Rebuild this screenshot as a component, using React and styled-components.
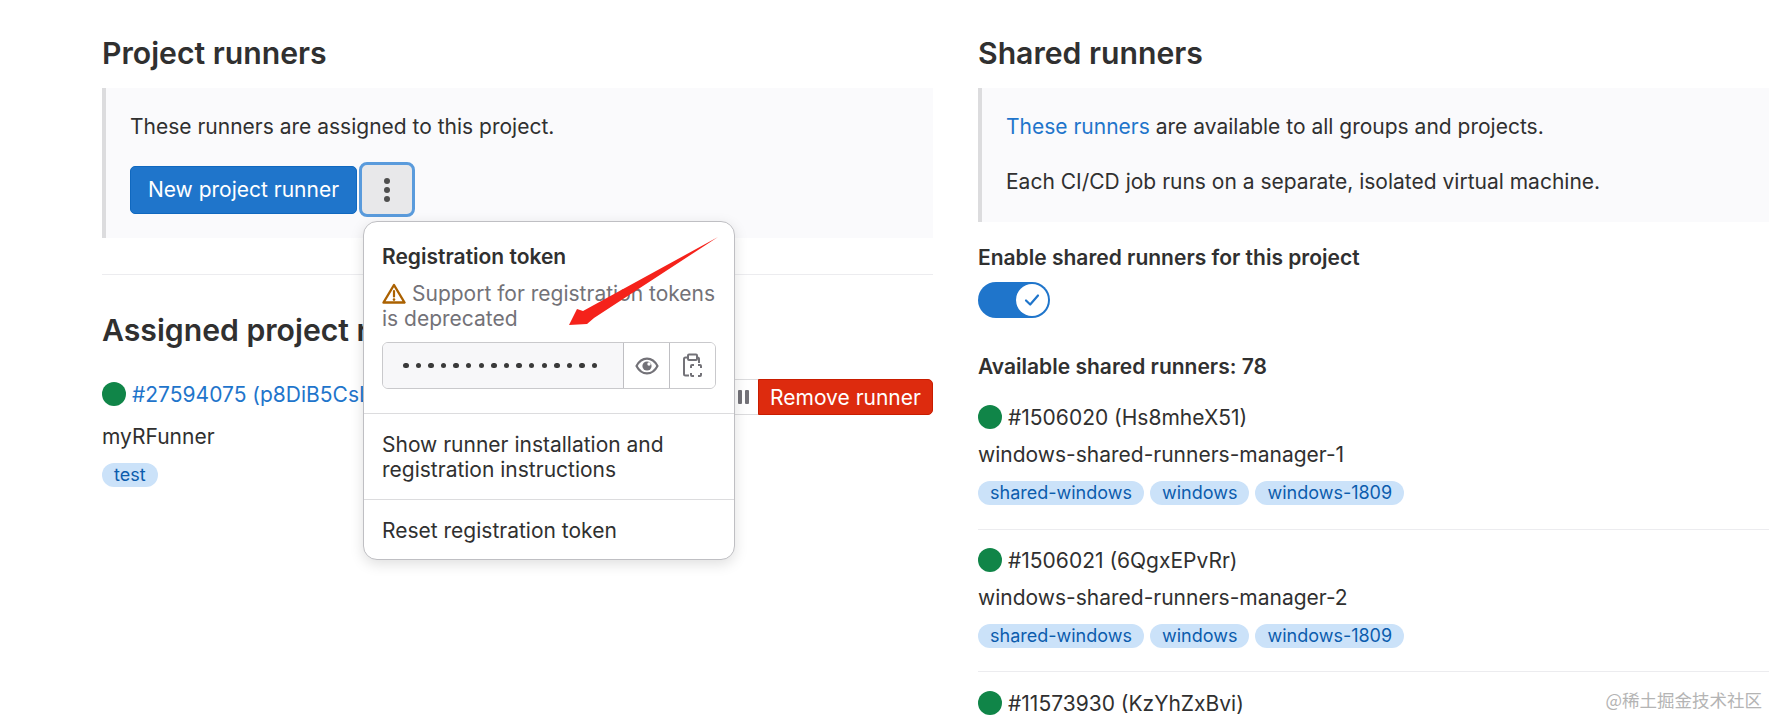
import React from "react";
import styled, { createGlobalStyle } from "styled-components";

const GlobalStyle = createGlobalStyle`
  html, body {
    margin: 0;
    padding: 0;
    background: #fff;
    overflow: hidden;
  }
  body {
    font-family: Inter, "Noto Sans", sans-serif;
    font-size: 21px;
    color: #303030;
  }
`;

const Page = styled.div`
  position: relative;
  width: 1769px;
  height: 716px;
  overflow: hidden;
  box-sizing: border-box;
  padding: 31px 0 0 102px;
  display: grid;
  grid-template-columns: 831px 831px;
  column-gap: 45px;
  align-items: start;
`;

const Column = styled.section`
  display: flex;
  flex-direction: column;
`;

const Heading = styled.h2`
  margin: ${(p) => p.$top || 0}px 0 0;
  font-size: 30.2px;
  line-height: 44px;
  height: 44px;
  font-weight: 600;
  color: #303030;
  white-space: nowrap;
`;

const Callout = styled.div`
  box-sizing: border-box;
  height: ${(p) => p.$height}px;
  margin-top: 13px;
  padding: 26px 24px 0;
  background: #fafafc;
  border-left: 4px solid #dcdcde;
`;

const CalloutText = styled.p`
  margin: 0 0 ${(p) => p.$gap || 0}px;
  line-height: 26px;
  white-space: nowrap;
`;

const Link = styled.a`
  color: #1f75cb;
  text-decoration: none;
  white-space: nowrap;
`;

const Actions = styled.div`
  display: flex;
  align-items: center;
  gap: 2px;
  margin-top: 22px;
  position: relative;
`;

const PrimaryButton = styled.button`
  box-sizing: border-box;
  width: 227px;
  height: 48px;
  padding: 0;
  border: 1px solid #1068bf;
  border-radius: 5px;
  background: #1f75cb;
  color: #fff;
  font: 400 21px Inter, sans-serif;
`;

const KebabButton = styled.button`
  box-sizing: border-box;
  width: 56px;
  height: 55px;
  padding: 0;
  border: 3px solid #5a9bdc;
  border-radius: 8px;
  background: #e8e8ea;
  display: flex;
  align-items: center;
  justify-content: center;
  gap: 3px;
  flex-direction: column;
`;

const KebabDot = styled.span`
  width: 6px;
  height: 6px;
  border-radius: 50%;
  background: #4f4f4f;
`;

const Dropdown = styled.div`
  position: absolute;
  left: 233px;
  top: 59px;
  z-index: 3;
  box-sizing: border-box;
  width: 372px;
  height: 339px;
  background: #fff;
  border: 1px solid #bfbfc3;
  border-radius: 14px;
  box-shadow: 0 4px 14px rgba(0, 0, 0, 0.13);
`;

const DropdownHead = styled.div`
  padding: 21px 18px 0;
  height: 192px;
  box-sizing: border-box;
  border-bottom: 1px solid #dcdcde;
`;

const DropdownTitle = styled.div`
  font-weight: 600;
  line-height: 28px;
`;

const Deprecation = styled.div`
  margin-top: 10px;
  line-height: 25px;
  color: #737278;
`;

const WarningIcon = styled.svg`
  width: 24px;
  height: 21px;
  vertical-align: -3px;
  margin-right: 6px;
`;

const TokenField = styled.div`
  display: flex;
  height: 47px;
  margin-top: 11px;
  box-sizing: border-box;
  border: 1px solid #c9c9cc;
  border-radius: 6px;
  overflow: hidden;
`;

const TokenValue = styled.div`
  flex: 1;
  background: #f7f7f9;
  padding-left: 20px;
  display: flex;
  align-items: center;
  gap: 7.1px;
`;

const TokenDot = styled.span`
  width: 5.5px;
  height: 5.5px;
  border-radius: 50%;
  background: #3a3a3a;
`;

const TokenButton = styled.div`
  width: 46px;
  flex: none;
  box-sizing: border-box;
  border-left: 1px solid #bfbfc3;
  display: flex;
  align-items: center;
  justify-content: center;
  background: #fff;
`;

const MenuItem = styled.div`
  box-sizing: border-box;
  height: ${(p) => p.$height}px;
  padding: 18px 18px 0;
  line-height: 25px;
  border-bottom: ${(p) => (p.$divided ? "1px solid #dcdcde" : "none")};
`;

const Divider = styled.hr`
  margin: ${(p) => p.$margin};
  border: 0;
  border-top: 1px solid #ececef;
`;

const StatusRow = styled.div`
  display: flex;
  align-items: center;
  gap: 6px;
  height: 26px;
  white-space: nowrap;
`;

const AssignedStatus = styled(StatusRow)`
  margin-top: 2px;
`;

const StatusDot = styled.span`
  width: 24px;
  height: 24px;
  flex: none;
  border-radius: 50%;
  background: #108548;
`;

const RunnerTitle = styled.div`
  display: flex;
  justify-content: space-between;
  align-items: flex-start;
  margin-top: ${(p) => p.$top}px;
`;

const RunnerActions = styled.div`
  display: flex;
  height: 36px;
`;

const PauseButton = styled.div`
  box-sizing: border-box;
  width: 56px;
  border: 1px solid #dcdcde;
  border-right: 0;
  border-radius: 5px 0 0 5px;
  display: flex;
  align-items: center;
  justify-content: flex-end;
  gap: 3px;
  padding-right: 9px;
`;

const PauseBar = styled.span`
  width: 4px;
  height: 14px;
  border-radius: 1px;
  background: #737278;
`;

const DangerButton = styled.button`
  box-sizing: border-box;
  width: 175px;
  padding: 0;
  border: 1px solid #c91c00;
  border-radius: 0 5px 5px 0;
  background: #dd2b0e;
  color: #fff;
  font: 400 21px Inter, sans-serif;
`;

const RunnerName = styled.div`
  margin-top: ${(p) => p.$top}px;
  line-height: 26px;
`;

const Tags = styled.div`
  display: flex;
  gap: 6px;
  margin-top: 13px;
`;

const Tag = styled.span`
  height: 24px;
  padding: 0 12px;
  border-radius: 12px;
  background: #cbe2f9;
  color: #0b5cad;
  font-size: 18px;
  line-height: 24px;
`;

const StrongLine = styled.div`
  font-weight: 600;
  line-height: 26px;
  margin-top: ${(p) => p.$top}px;
`;

const Toggle = styled.div`
  box-sizing: border-box;
  width: 72px;
  height: 36px;
  margin-top: 11px;
  padding: 2px;
  border-radius: 18px;
  background: #1f75cb;
  display: flex;
  justify-content: flex-end;
`;

const ToggleKnob = styled.span`
  width: 32px;
  height: 32px;
  border-radius: 50%;
  background: #fff;
  display: flex;
  align-items: center;
  justify-content: center;
`;

const RunnerList = styled.div`
  margin-top: 24px;
`;

const Arrow = styled.svg`
  position: absolute;
  left: 0;
  top: 0;
  z-index: 4;
  pointer-events: none;
`;

const Watermark = styled.div`
  position: absolute;
  right: 7px;
  top: 689px;
  z-index: 4;
  font-family: "Noto Sans CJK SC", sans-serif;
  font-size: 17.5px;
  line-height: 22px;
  color: #b4b4b4;
`;

const EyeIcon = () => (
  <svg width="24" height="24" viewBox="0 0 24 24" fill="none">
    <path
      d="M1.500 12C4 7.200 7.600 4.600 12 4.600S20 7.200 22.500 12C20 16.800 16.400 19.400 12 19.400S4 16.800 1.500 12Z"
      stroke="#737278"
      strokeWidth="2.200"
      strokeLinejoin="round"
    />
    <circle cx="12" cy="12" r="4.600" fill="#737278" />
    <circle cx="14" cy="10" r="1.700" fill="#fff" />
  </svg>
);

const ClipboardIcon = () => (
  <svg width="20" height="26" viewBox="0 0 20 26" fill="none" stroke="#737278" strokeWidth="2">
    <path d="M5 4.500H2.500A1.500 1.500 0 0 0 1 6v15a1.500 1.500 0 0 0 1.500 1.500H6" />
    <path d="M14 4.500h.5A1.500 1.500 0 0 1 16 6v4" />
    <rect x="5" y="1.500" width="9" height="5.500" rx="1" />
    <path d="M8 15v-2a1 1 0 0 1 1-1h2M15 12h2a1 1 0 0 1 1 1v2M18 20v2a1 1 0 0 1-1 1h-2M11 23H9a1 1 0 0 1-1-1v-2" />
  </svg>
);

const Runner = ({ id, name, tags }) => (
  <>
    <StatusRow>
      <StatusDot />
      <span>{id}</span>
    </StatusRow>
    <RunnerName $top={12}>{name}</RunnerName>
    <Tags>
      {tags.map((t) => (
        <Tag key={t}>{t}</Tag>
      ))}
    </Tags>
  </>
);

const sharedTags = ["shared-windows", "windows", "windows-1809"];

export default function App() {
  return (
    <>
      <GlobalStyle />
      <Page>
        <Column>
          <Heading>Project runners</Heading>
          <Callout $height={150}>
            <CalloutText>These runners are assigned to this project.</CalloutText>
            <Actions>
              <PrimaryButton>New project runner</PrimaryButton>
              <KebabButton>
                <KebabDot />
                <KebabDot />
                <KebabDot />
              </KebabButton>
              <Dropdown>
                <DropdownHead>
                  <DropdownTitle>Registration token</DropdownTitle>
                  <Deprecation>
                    <WarningIcon viewBox="0 0 24 21" fill="none">
                      <path
                        d="M12 2 L22.500 19.500 H1.500 Z"
                        stroke="#ab6100"
                        strokeWidth="2.400"
                        strokeLinejoin="round"
                      />
                      <path d="M12 8v5.500" stroke="#ab6100" strokeWidth="2.200" strokeLinecap="round" />
                      <circle cx="12" cy="16.600" r="1.300" fill="#ab6100" />
                    </WarningIcon>
                    Support for registration tokens is deprecated
                  </Deprecation>
                  <TokenField>
                    <TokenValue>
                      {Array.from({ length: 16 }, (_, i) => (
                        <TokenDot key={i} />
                      ))}
                    </TokenValue>
                    <TokenButton>
                      <EyeIcon />
                    </TokenButton>
                    <TokenButton>
                      <ClipboardIcon />
                    </TokenButton>
                  </TokenField>
                </DropdownHead>
                <MenuItem $height={86} $divided>
                  Show runner installation and registration instructions
                </MenuItem>
                <MenuItem $height={60}>Reset registration token</MenuItem>
              </Dropdown>
            </Actions>
          </Callout>
          <Divider $margin="36px 0 0" />
          <Heading $top={33}>Assigned project runners</Heading>
          <RunnerTitle $top={27}>
            <AssignedStatus>
              <StatusDot />
              <Link href="#">#27594075 (p8DiB5CsL)</Link>
            </AssignedStatus>
            <RunnerActions>
              <PauseButton>
                <PauseBar />
                <PauseBar />
              </PauseButton>
              <DangerButton>Remove runner</DangerButton>
            </RunnerActions>
          </RunnerTitle>
          <RunnerName $top={9}>myRFunner</RunnerName>
          <Tags>
            <Tag>test</Tag>
          </Tags>
        </Column>

        <Column>
          <Heading>Shared runners</Heading>
          <Callout $height={134}>
            <CalloutText $gap={29}>
              <Link href="#">These runners</Link> are available to all groups and projects.
            </CalloutText>
            <CalloutText>Each CI/CD job runs on a separate, isolated virtual machine.</CalloutText>
          </Callout>
          <StrongLine $top={23}>Enable shared runners for this project</StrongLine>
          <Toggle>
            <ToggleKnob>
              <svg width="18" height="18" viewBox="0 0 18 18" fill="none">
                <path
                  d="M3 9.500 L7.200 13.500 L15 4.500"
                  stroke="#1f75cb"
                  strokeWidth="2.200"
                  strokeLinecap="round"
                  strokeLinejoin="round"
                />
              </svg>
            </ToggleKnob>
          </Toggle>
          <StrongLine $top={36}>Available shared runners: 78</StrongLine>
          <RunnerList>
            <Runner id="#1506020 (Hs8mheX51)" name="windows-shared-runners-manager-1" tags={sharedTags} />
            <Divider $margin="24px 0 17px" />
            <Runner id="#1506021 (6QgxEPvRr)" name="windows-shared-runners-manager-2" tags={sharedTags} />
            <Divider $margin="23px 0 18px" />
            <StatusRow>
              <StatusDot />
              <span>#11573930 (KzYhZxBvi)</span>
            </StatusRow>
          </RunnerList>
        </Column>

        <Arrow width="1769" height="716" viewBox="0 0 1769 716">
          <path d="M718 237 L594 318 L587 324 L569 325 L577 309 L583 311 Z" fill="#f5221b" />
        </Arrow>
        <Watermark>@稀土掘金技术社区</Watermark>
      </Page>
    </>
  );
}
